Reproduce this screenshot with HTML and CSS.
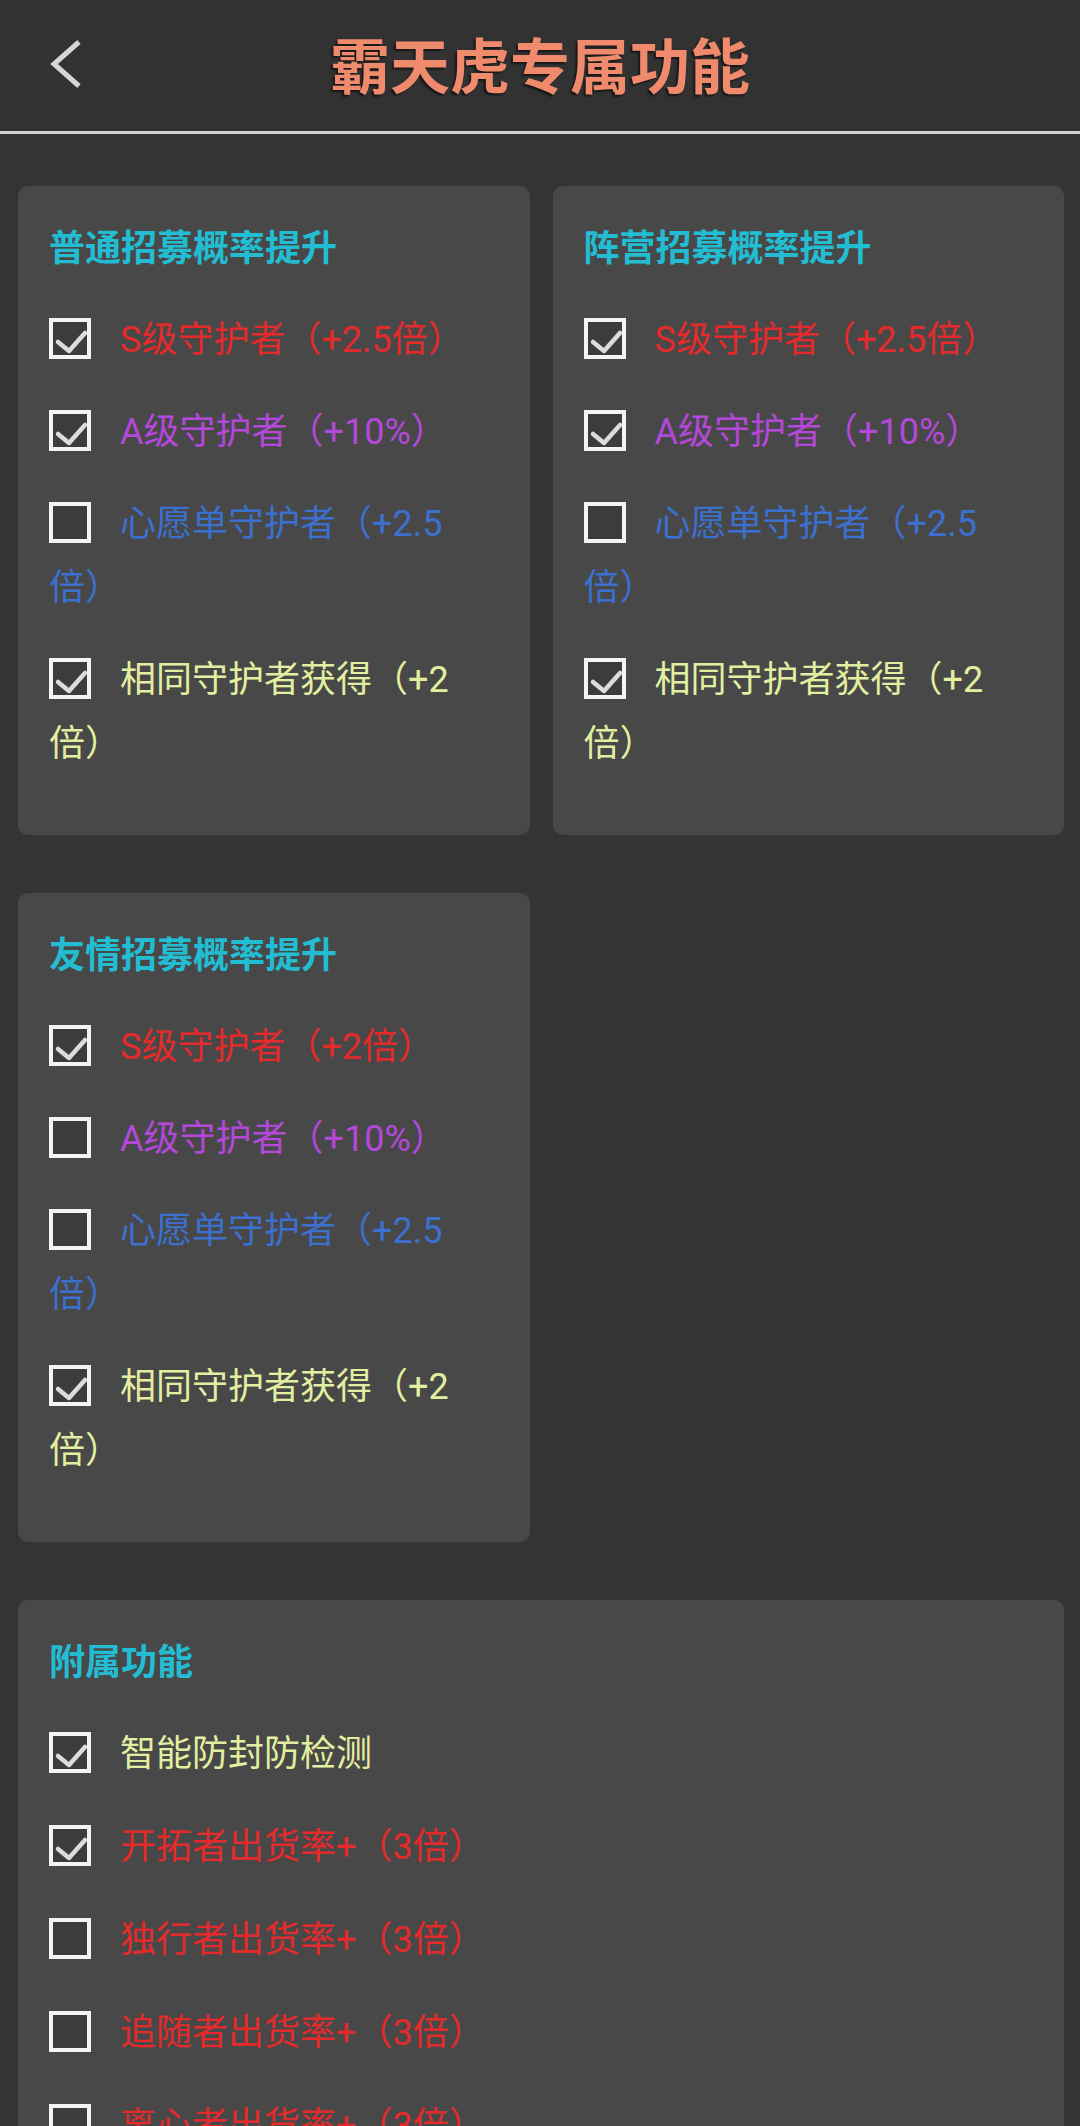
FILE: index.html
```html
<!DOCTYPE html>
<html lang="zh-CN">
<head>
<meta charset="utf-8">
<title>霸天虎专属功能</title>
<link rel="stylesheet" href="styles.css">
</head>
<body>
<header class="topbar">
  <span class="back">
    <svg width="40" height="56" viewBox="0 0 40 56"><path d="M31 4 L6 26 L31 48" fill="none" stroke="#d6d6d6" stroke-width="5" stroke-linejoin="miter"/></svg>
  </span>
  <h1 class="title">霸天虎专属功能</h1>
</header>
<main class="grid">
  <section class="card">
    <h2 class="card-title">普通招募概率提升</h2>
    <p class="opt red"><span class="cb on"><svg viewBox="0 0 42 42"><path d="M9 24 L20 33 L36 15"/></svg></span>S级守护者（+2.5倍）</p>
    <p class="opt purple"><span class="cb on"><svg viewBox="0 0 42 42"><path d="M9 24 L20 33 L36 15"/></svg></span>A级守护者（+10%）</p>
    <p class="opt blue"><span class="cb"></span>心愿单守护者（+2.5<wbr>倍）</p>
    <p class="opt yellow"><span class="cb on"><svg viewBox="0 0 42 42"><path d="M9 24 L20 33 L36 15"/></svg></span>相同守护者获得（+2<wbr>倍）</p>
  </section>
  <section class="card">
    <h2 class="card-title">阵营招募概率提升</h2>
    <p class="opt red"><span class="cb on"><svg viewBox="0 0 42 42"><path d="M9 24 L20 33 L36 15"/></svg></span>S级守护者（+2.5倍）</p>
    <p class="opt purple"><span class="cb on"><svg viewBox="0 0 42 42"><path d="M9 24 L20 33 L36 15"/></svg></span>A级守护者（+10%）</p>
    <p class="opt blue"><span class="cb"></span>心愿单守护者（+2.5<wbr>倍）</p>
    <p class="opt yellow"><span class="cb on"><svg viewBox="0 0 42 42"><path d="M9 24 L20 33 L36 15"/></svg></span>相同守护者获得（+2<wbr>倍）</p>
  </section>
  <section class="card">
    <h2 class="card-title">友情招募概率提升</h2>
    <p class="opt red"><span class="cb on"><svg viewBox="0 0 42 42"><path d="M9 24 L20 33 L36 15"/></svg></span>S级守护者（+2倍）</p>
    <p class="opt purple"><span class="cb"></span>A级守护者（+10%）</p>
    <p class="opt blue"><span class="cb"></span>心愿单守护者（+2.5<wbr>倍）</p>
    <p class="opt yellow"><span class="cb on"><svg viewBox="0 0 42 42"><path d="M9 24 L20 33 L36 15"/></svg></span>相同守护者获得（+2<wbr>倍）</p>
  </section>
  <section class="card wide">
    <h2 class="card-title">附属功能</h2>
    <p class="opt yellow"><span class="cb on"><svg viewBox="0 0 42 42"><path d="M9 24 L20 33 L36 15"/></svg></span>智能防封防检测</p>
    <p class="opt red"><span class="cb on"><svg viewBox="0 0 42 42"><path d="M9 24 L20 33 L36 15"/></svg></span>开拓者出货率+（3倍）</p>
    <p class="opt red"><span class="cb"></span>独行者出货率+（3倍）</p>
    <p class="opt red"><span class="cb"></span>追随者出货率+（3倍）</p>
    <p class="opt red"><span class="cb"></span>离心者出货率+（3倍）</p>
  </section>
</main>
</body>
</html>
```

FILE: styles.css
```css
* { box-sizing: border-box; }
html, body {
  margin: 0;
  padding: 0;
  background: #343434;
  font-family: Roboto, "Noto Sans CJK SC", sans-serif;
}
.topbar {
  position: relative;
  height: 134px;
  background: #323232;
  border-bottom: 3px solid #d4d4d4;
  display: flex;
  align-items: center;
  justify-content: center;
}
.back {
  position: absolute;
  left: 48px;
  top: 38px;
  width: 40px;
  height: 56px;
}
.back svg { display: block; }
.title {
  margin: 0 0 6px 0;
  font-family: "Noto Sans CJK SC", sans-serif;
  font-size: 60px;
  font-weight: 700;
  line-height: 72px;
  color: #ef8a6d;
  text-shadow: -2px 2px 2px rgba(0, 0, 0, 0.55);
}
.grid {
  display: grid;
  grid-template-columns: 1fr 1fr;
  column-gap: 23px;
  row-gap: 58px;
  padding: 52px 16px 40px 18px;
  align-items: start;
}
.card {
  background: #484848;
  border-radius: 10px;
  padding: 35px 30px 59px 31px;
}
.card.wide { grid-column: 1 / 3; }
.card-title {
  margin: 0 0 39px 0;
  font-family: "Noto Sans CJK SC", sans-serif;
  font-size: 36px;
  font-weight: 700;
  line-height: 48px;
  color: #22bdd2;
}
.opt {
  margin: 0 0 28px 0;
  font-size: 36px;
  line-height: 64px;
}
.wide .opt { margin-bottom: 29px; }
.opt:last-child { margin-bottom: 0; }
.red { color: #e52a2b; }
.purple { color: #b348da; }
.blue { color: #3c70cf; }
.yellow { color: #e3efa0; }
.cb {
  display: inline-block;
  width: 42px;
  height: 41px;
  border: 4px solid #f4f4f4;
  background: #3c3c3c;
  margin-right: 29px;
  vertical-align: -7px;
  position: relative;
}
.cb svg {
  position: absolute;
  left: -4px;
  top: -4px;
  width: 42px;
  height: 42px;
}
.cb svg path {
  fill: none;
  stroke: #dcdcdc;
  stroke-width: 4.5;
  stroke-linecap: round;
  stroke-linejoin: round;
}
```
